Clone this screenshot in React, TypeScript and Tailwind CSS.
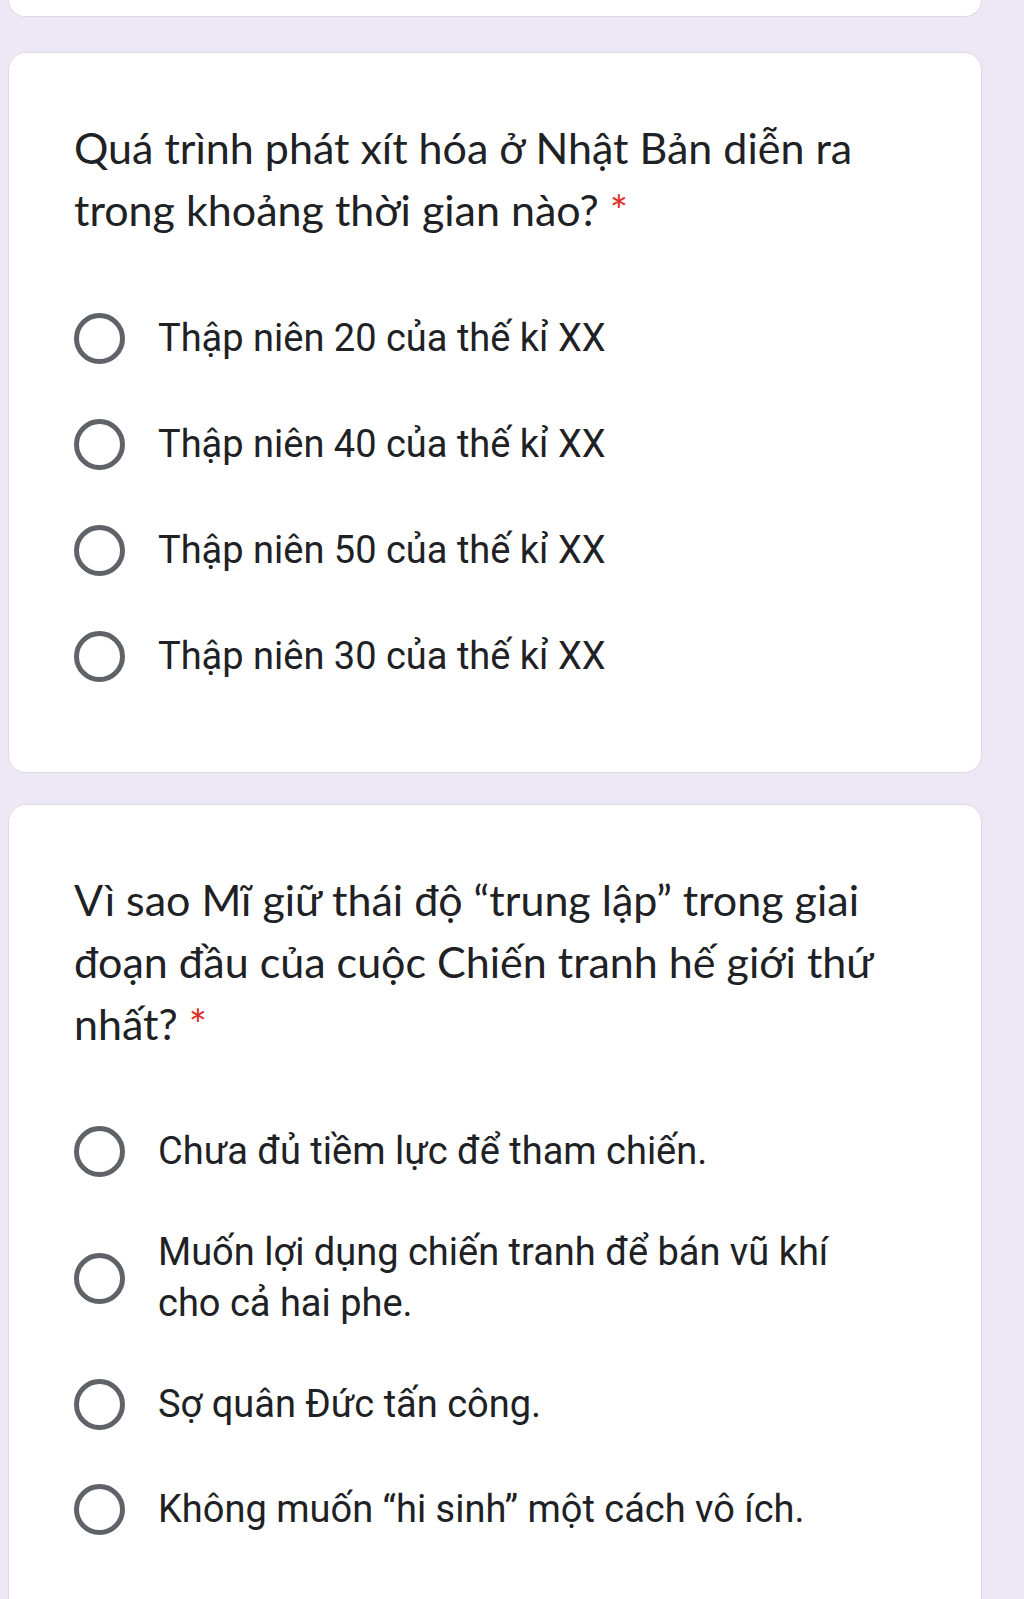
import React from 'react';

type Option = { lines: string[] };

const questions: { title: string[]; options: Option[] }[] = [
  {
    title: ['Quá trình phát xít hóa ở Nhật Bản diễn ra', 'trong khoảng thời gian nào?'],
    options: [
      { lines: ['Thập niên 20 của thế kỉ XX'] },
      { lines: ['Thập niên 40 của thế kỉ XX'] },
      { lines: ['Thập niên 50 của thế kỉ XX'] },
      { lines: ['Thập niên 30 của thế kỉ XX'] },
    ],
  },
  {
    title: [
      'Vì sao Mĩ giữ thái độ “trung lập” trong giai',
      'đoạn đầu của cuộc Chiến tranh hế giới thứ',
      'nhất?',
    ],
    options: [
      { lines: ['Chưa đủ tiềm lực để tham chiến.'] },
      { lines: ['Muốn lợi dụng chiến tranh để bán vũ khí', 'cho cả hai phe.'] },
      { lines: ['Sợ quân Đức tấn công.'] },
      { lines: ['Không muốn “hi sinh” một cách vô ích.'] },
    ],
  },
];

function Radio() {
  return <div className="w-[51px] h-[51px] shrink-0 rounded-full border-[5px] border-[#5f6368]" />;
}

function QuestionCard({ title, options, last }: { title: string[]; options: Option[]; last?: boolean }) {
  return (
    <div
      className={`bg-white border border-[#dadce0] rounded-[18px] pl-[65px] pr-[30px] pt-[64px] ${
        last ? 'pb-[120px]' : 'pb-[63px]'
      }`}
    >
      {/* question title */}
      <div
        className="text-[43px] leading-[62px] text-[#202124] whitespace-nowrap"
        style={{ fontFamily: 'Lato, "Noto Sans", sans-serif' }}
      >
        {title.map((line, i) => (
          <div key={i}>
            {line}
            {i === title.length - 1 && <span className="text-[#d93025]"> *</span>}
          </div>
        ))}
      </div>

      <div className="mt-[44px] flex flex-col">
        {options.map((opt, i) => (
          <div
            key={i}
            className={`flex items-center py-[23px] ${last ? 'min-h-[105px]' : 'min-h-[106px]'}`}
          >
            <Radio />
            <div
              className="ml-[33px] text-[38px] leading-[51px] text-[#202124] whitespace-nowrap"
              style={{ fontFamily: 'Roboto, "Noto Sans", sans-serif' }}
            >
              {opt.lines.map((l, j) => (
                <div key={j}>{l}</div>
              ))}
            </div>
          </div>
        ))}
      </div>
    </div>
  );
}

export default function App() {
  return (
    <div className="w-[1024px] h-[1599px] overflow-hidden bg-[#ede7f6]">
      <div className="w-[974px] ml-[8px] flex flex-col">
        {/* bottom edge of the previous card */}
        <div className="h-[17px] bg-white border border-t-0 border-[#dadce0] rounded-b-[18px]" />
        <div className="mt-[35px]">
          <QuestionCard title={questions[0].title} options={questions[0].options} />
        </div>
        <div className="mt-[31px]">
          <QuestionCard title={questions[1].title} options={questions[1].options} last />
        </div>
      </div>
    </div>
  );
}
